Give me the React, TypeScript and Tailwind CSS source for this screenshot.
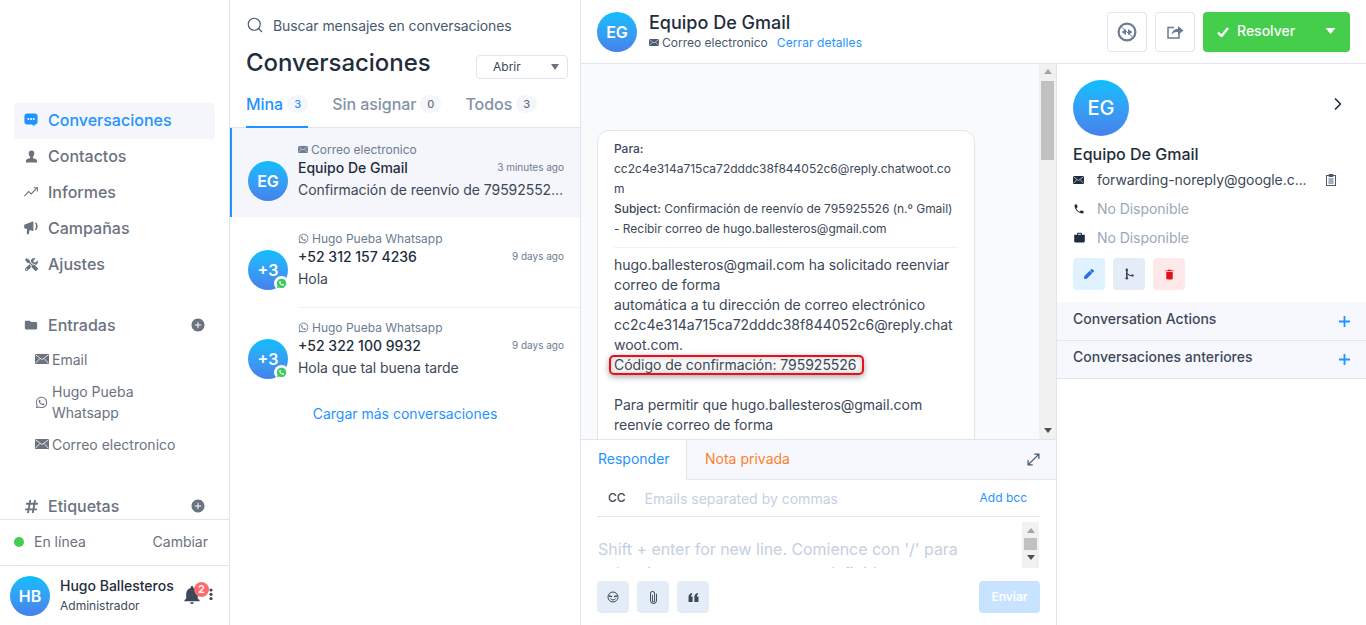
import React from "react";
import {
  IoMdFolder, IoIosAddCircle, IoLogoWhatsapp, IoMdNotifications, IoMdCall, IoMdBriefcase, IoMdTrash, IoMdAttach,
} from "react-icons/io";
import { FaHashtag, FaTools, FaPen, FaWhatsapp } from "react-icons/fa";
import { ChevronRight, Search } from "lucide-react";

function Avatar({ text, size, font }: { text: string; size: string; font: string }) {
  return (
    <div className={`${size} ${font} shrink-0 rounded-full bg-gradient-to-t from-[#4481eb] to-[#04befe] text-white flex items-center justify-center`}>
      {text}
    </div>
  );
}

function ChatBubbleIcon({ className }: { className?: string }) {
  return (
    <svg viewBox="0 0 14 14" className={className} fill="currentColor">
      <path d="M3 .5h8A2.6 2.6 0 0 1 13.6 3v6A2.6 2.6 0 0 1 11 11.5h-.6l.6 2-3-2H3A2.6 2.6 0 0 1 .4 9V3A2.6 2.6 0 0 1 3 .5Z" />
      <circle cx="4.3" cy="6" r="1" fill="#fff" />
      <circle cx="7" cy="6" r="1" fill="#fff" />
      <circle cx="9.7" cy="6" r="1" fill="#fff" />
    </svg>
  );
}

function MailIcon({ className, line = "#fff" }: { className?: string; line?: string }) {
  return (
    <svg viewBox="0 0 14 10" className={className} fill="currentColor">
      <rect width="14" height="10" rx="0.6" />
      <path d="M.5.8 7 5.6 13.5.8M.6 9.2l4.3-4.7M13.4 9.2 9.1 4.5" fill="none" stroke={line} strokeWidth="0.8" />
    </svg>
  );
}

function PersonIcon({ className }: { className?: string }) {
  return (
    <svg viewBox="0 0 14 14" className={className} fill="currentColor">
      <path d="M7 .5c2 0 3 1.4 3 3.3 0 1.600-.8 3-1.500 3.600v1.300c1.700.6 4.500 1 4.500 3.300v1.500H1V12c0-2.300 2.800-2.700 4.500-3.300V7.400C4.800 6.800 4 5.400 4 3.800 4 1.900 5 .5 7 .5Z" />
    </svg>
  );
}

function GraphIcon({ className }: { className?: string }) {
  return (
    <svg viewBox="0 0 14 10" className={className} fill="none" stroke="currentColor" strokeWidth="1.1">
      <path d="M.4 9.200 4.600 4.600 7.200 7 12.800 1.200" />
      <path d="M9.600.7h3.800v3.800" />
    </svg>
  );
}

function MegaphoneIcon({ className }: { className?: string }) {
  return (
    <svg viewBox="0 0 14 14" className={className} fill="currentColor">
      <path d="M.2 3.800 8.600.6c.5-.2.8.1.8.6v8.200c0 .5-.3.8-.8.6L5.600 9l-.8 4.200H2.800L3 8.100.2 7.200Z" />
      <path d="M10.600 1.600h.8c1.300 0 2.200 1.600 2.200 3.700s-.9 3.700-2.200 3.700h-.8c.8-.8 1.300-2.200 1.300-3.700s-.5-2.900-1.300-3.700Z" />
    </svg>
  );
}

function NavItem({ icon, label, active }: { icon: React.ReactNode; label: string; active?: boolean }) {
  return (
    <div className={`h-9 mx-[14px] pb-[2px] rounded-[4px] flex items-center pl-[10px] ${active ? "bg-[#f4f6fb] text-[#1f93ff]" : "text-[#6b7280]"}`}>
      <span className="w-[14px] h-[14px] flex items-center justify-center">{icon}</span>
      <span className="ml-[10px] text-[16px] font-medium">{label}</span>
    </div>
  );
}

function Sidebar() {
  return (
    <aside className="w-[230px] shrink-0 h-full border-r border-[#e0e6ed] flex flex-col">
      <div className="flex-1 overflow-hidden pt-[103px] min-h-0">
        <NavItem active label="Conversaciones" icon={<ChatBubbleIcon className="w-[14px] h-[14px] shrink-0" />} />
        <NavItem label="Contactos" icon={<PersonIcon className="w-[13px] h-[13px] shrink-0" />} />
        <NavItem label="Informes" icon={<GraphIcon className="w-[14px] h-[10px] shrink-0" />} />
        <NavItem label="Campañas" icon={<MegaphoneIcon className="w-[14px] h-[14px] shrink-0" />} />
        <NavItem label="Ajustes" icon={<FaTools className="w-[13px] h-[13px] shrink-0" />} />

        <div className="mt-[25px] mx-[14px] h-9 pb-[2px] pl-[10px] pr-[9px] flex items-center text-[#6b7280]">
          <IoMdFolder className="w-[14px] h-[14px]" />
          <span className="ml-[10px] text-[16px] font-medium flex-1">Entradas</span>
          <IoIosAddCircle className="w-[16px] h-[16px]" />
        </div>
        <div className="flex items-center h-[34px] -mt-[2px] pl-[35px] text-[14px] text-[#6b7280]">
          <MailIcon className="w-[14px] h-[10px] mr-[3px]" />
          Email
        </div>
        <div className="flex items-center h-[50px] mt-[1px] pl-[35px] text-[14px] leading-[21px] text-[#6b7280]">
          <FaWhatsapp className="w-[13px] h-[13px] mr-[4px] shrink-0" />
          <span>Hugo Pueba<br />Whatsapp</span>
        </div>
        <div className="flex items-center h-[34px] pl-[35px] text-[14px] text-[#6b7280]">
          <MailIcon className="w-[14px] h-[10px] mr-[3px]" />
          Correo electronico
        </div>
        <div className="mt-[28px] mx-[14px] h-9 pb-[2px] pl-[10px] pr-[9px] flex items-center text-[#6b7280]">
          <FaHashtag className="w-[15px] h-[15px] -mr-[1px]" />
          <span className="ml-[10px] text-[16px] font-medium flex-1">Etiquetas</span>
          <IoIosAddCircle className="w-[16px] h-[16px]" />
        </div>
      </div>
      <div className="h-[46px] shrink-0 border-t border-[#e0e6ed] pb-[2px] flex items-center pl-[14px] pr-[21px] text-[14px] text-[#6b7280]">
        <span className="w-[10px] h-[10px] rounded-full bg-[#44ce4b]" />
        <span className="ml-[10px] flex-1">En línea</span>
        <span>Cambiar</span>
      </div>
      <div className="h-[60px] shrink-0 border-t border-[#e0e6ed] flex items-center pl-[10px]">
        <Avatar text="HB" size="w-[40px] h-[40px]" font="text-[16px] font-semibold" />
        <div className="ml-[10px] w-[123px]">
          <div className="text-[14px] leading-[20px] font-medium text-[#1f2d3d]">Hugo Ballesteros</div>
          <div className="text-[12px] leading-[20px] text-[#3c4858]">Administrador</div>
        </div>
        <div className="relative w-[20px] h-[22px] -mt-[1px]">
          <IoMdNotifications className="w-[22px] h-[22px] -ml-[2px] text-[#3c4858]" />
          <span className="absolute -top-[2px] left-[11px] w-[15px] h-[15px] rounded-full bg-[#ff6b6b] text-white text-[11px] font-semibold flex items-center justify-center">2</span>
        </div>
        <svg viewBox="0 0 4 12" className="w-[4px] h-[12px] ml-[6px] -mt-[4px]" fill="#3c4858">
          <circle cx="2" cy="2" r="1.6" /><circle cx="2" cy="6.300" r="1.6" /><circle cx="2" cy="10.500" r="1.6" />
        </svg>
      </div>
    </aside>
  );
}

function Tab({ label, count, active }: { label: string; count: string; active?: boolean }) {
  return (
    <div className={`h-[38px] flex items-start pt-[2px] border-b-2 ${active ? "border-[#1f93ff]" : "border-transparent"}`}>
      <span className={`text-[16px] font-medium leading-[24px] tracking-[-0.05px] ${active ? "text-[#1f93ff]" : "text-[#8492a6]"}`}>{label}</span>
      <span className={`ml-[4px] mt-[3px] w-[21px] h-[18px] rounded-full bg-[#f4f6fb] text-[11px] font-medium flex items-center justify-center ${active ? "text-[#1f93ff]" : "text-[#6b7280]"}`}>{count}</span>
    </div>
  );
}

function ConvRow({ channel, wa, name, time, msg, avatar, active, divider }: { channel: string; wa?: boolean; name: string; time: string; msg: string; avatar: string; active?: boolean; divider?: boolean }) {
  return (
    <div className={`h-[89px] flex ${active ? "bg-[#f4f6fb] border-l-2 border-[#1f93ff] pl-[16px]" : "pl-[18px]"}`}>
      <div className="relative mt-[33px] h-[40px]">
        <Avatar text={avatar} size="w-[40px] h-[40px]" font="text-[16px] font-semibold" />
        {wa && (
          <span className="absolute -right-[1px] -bottom-[1px] w-[15px] h-[15px] rounded-full bg-white flex items-center justify-center">
            <IoLogoWhatsapp className="w-[11px] h-[11px] text-[#44c767]" />
          </span>
        )}
      </div>
      <div className={`ml-[10px] flex-1 pr-[16px] min-w-0 pt-[14px] ${divider ? "h-[91px] shrink-0 border-b border-[#f0f2f5]" : ""}`}>
        <div className="flex items-center text-[12px] leading-[15px] text-[#6b7c93]">
          {wa ? <FaWhatsapp className="w-[11px] h-[11px] mr-[3px]" /> : <MailIcon className="w-[10px] h-[7px] mr-[3px]" line="#f4f6fb" />}
          {channel}
        </div>
        <div className="flex items-center justify-between h-[20px]">
          <span className="text-[14px] font-medium text-[#1f2d3d]">{name}</span>
          <span className="text-[10px] text-[#6b7c93] mt-[1px]">{time}</span>
        </div>
        <div className="mt-[3px] text-[14px] leading-[20px] text-[#3c4858] truncate tracking-[-0.06px]">{msg}</div>
      </div>
    </div>
  );
}

function ConversationList() {
  return (
    <section className="w-[351px] shrink-0 h-full border-r border-[#e0e6ed] flex flex-col">
      <div className="flex items-center h-[26px] mt-[12px] pl-[16px]">
        <Search className="w-[18px] h-[18px] text-[#47596f]" strokeWidth={1.5} />
        <span className="ml-[9px] text-[14px] text-[#47596f] tracking-[-0.09px]">Buscar mensajes en conversaciones</span>
      </div>
      <div className="flex items-center justify-between pl-[16px] pr-[12px] mt-[9px] h-[32px]">
        <h1 className="text-[24px] font-medium text-[#1f2d3d] tracking-[-0.05px]">Conversaciones</h1>
        <div className="w-[92px] h-[24px] mt-[7px] rounded-[4px] border border-[#e0e6ed] flex items-center justify-between pl-[16px] pr-[8px] text-[12px] text-[#3c4858]">
          Abrir
          <svg viewBox="0 0 8 6" className="w-[8px] h-[6px]"><path d="M0 0h8L4 6Z" fill="#6b7280" /></svg>
        </div>
      </div>
      <div className="flex border-b border-[#e0e6ed] h-[38px] mt-[11px] pl-[16px] gap-[24px]">
        <Tab active label="Mina" count="3" />
        <Tab label="Sin asignar" count="0" />
        <Tab label="Todos" count="3" />
      </div>
      <ConvRow active avatar="EG" channel="Correo electronico" name="Equipo De Gmail" time="3 minutes ago" msg="Confirmación de reenvío de 795925526 (n.º Gmail)" />
      <ConvRow wa divider avatar="+3" channel="Hugo Pueba Whatsapp" name="+52 312 157 4236" time="9 days ago" msg="Hola" />
      <ConvRow wa avatar="+3" channel="Hugo Pueba Whatsapp" name="+52 322 100 9932" time="9 days ago" msg="Hola que tal buena tarde" />
      <div className="text-center text-[14px] text-[#1f93ff] mt-[8px]">Cargar más conversaciones</div>
    </section>
  );
}

function OutlineBtn({ children }: { children: React.ReactNode }) {
  return <div className="w-[40px] h-[40px] rounded-[4px] border border-[#e0e6ed] flex items-center justify-center text-[#6b7c93]">{children}</div>;
}

function SoftBtn({ children, className }: { children: React.ReactNode; className?: string }) {
  return <div className={`w-[32px] h-[32px] rounded-[4px] flex items-center justify-center ${className ?? "bg-[#e4ecf8] text-[#3c4858]"}`}>{children}</div>;
}

function Chat() {
  return (
    <section className="w-[476px] shrink-0 h-full border-r border-[#e0e6ed] flex flex-col min-h-0">
      <div className="h-[375px] shrink-0 flex overflow-hidden bg-[#f8fafc]">
        <div className="flex-1 pl-[16px] pt-[66px] min-w-0">
          <div className="w-[378px] rounded-t-[12px] border border-[#e0e6ed] bg-white px-[16px] pt-[8px] pb-[8px] text-[#3c4858] tracking-[-0.03px]">
            <div className="text-[12px] leading-[20px]">
              <div className="font-medium">Para:</div>
              <div className="tracking-normal">cc2c4e314a715ca72dddc38f844052c6@reply.chatwoot.co</div>
              <div>m</div>
              <div><span className="font-medium">Subject:</span> Confirmación de reenvío de 795925526 (n.º Gmail)</div>
              <div>- Recibir correo de hugo.ballesteros@gmail.com</div>
            </div>
            <div className="h-px bg-[#f0f2f5] mt-[8px] mb-[7px]" />
            <div className="text-[14px] leading-[20px]">
              <div>hugo.ballesteros@gmail.com ha solicitado reenviar</div>
              <div>correo de forma</div>
              <div>automática a tu dirección de correo electrónico</div>
              <div>cc2c4e314a715ca72dddc38f844052c6@reply.chat</div>
              <div>woot.com.</div>
              <div className="w-fit -ml-[5px] h-[20px] pl-[3px] pr-[5px] rounded-[5px] border-2 border-[#e8101c] leading-[16px] bg-[#f7f7f7] shadow-[0_2px_6px_rgba(0,0,0,0.35),inset_0_0_5px_rgba(0,0,0,0.2)]">Código de confirmación: 795925526</div>
              <div className="mt-[20px]">Para permitir que hugo.ballesteros@gmail.com</div>
              <div>reenvíe correo de forma</div>
            </div>
          </div>
        </div>
        <div className="w-[17px] shrink-0 bg-[#f1f1f1] flex flex-col items-center">
          <svg viewBox="0 0 8 5" className="w-[8px] h-[5px] mt-[5px]"><path d="M4 0l4 5H0Z" fill="#a3a3a3" /></svg>
          <div className="w-[13px] h-[79px] mt-[7px] bg-[#c1c1c1]" />
          <div className="flex-1" />
          <svg viewBox="0 0 8 5" className="w-[8px] h-[5px] mb-[6px]"><path d="M0 0h8L4 5Z" fill="#505050" /></svg>
        </div>
      </div>
      <div className="flex-1 min-h-0 border-t border-[#e0e6ed] flex flex-col">
        <div className="h-[40px] shrink-0 flex bg-[#f7f8fd]">
          <div className="w-[106px] pl-[17px] pb-[3px] bg-white border-r border-[#e0e6ed] flex items-center text-[14px] text-[#1f93ff]">Responder</div>
          <div className="flex-1 border-b border-[#e0e6ed] flex items-center justify-between pl-[18px] pr-[16px]">
            <span className="text-[14px] text-[#ff7f2a] -mt-[2px]">Nota privada</span>
            <svg viewBox="0 0 14 14" className="w-[13px] h-[13px] text-[#47596f]" fill="none" stroke="currentColor" strokeWidth="1.4">
              <path d="M2 12 12 2M7.800 1.200h5v5M1.200 7.800v5h5" />
            </svg>
          </div>
        </div>
        <div className="mx-[16px] h-[37px] shrink-0 border-b border-[#e0e6ed] flex items-center text-[12px]">
          <span className="ml-[11px] font-medium text-[#3c4858]">CC</span>
          <span className="ml-[19px] flex-1 text-[14px] text-[#c5d0df]">Emails separated by commas</span>
          <span className="mr-[13px] text-[#1f93ff]">Add bcc</span>
        </div>
        <div className="h-[46px] mt-[5px] shrink-0 mx-[16px] flex overflow-hidden">
          <div className="flex-1 pl-[1px] pt-[15px] text-[16px] leading-[24px] text-[#c5d0df] min-w-0 tracking-[-0.05px]">
            Shift + enter for new line. Comience con '/' para<br />
            seleccionar una respuesta predefinida.
          </div>
          <div className="w-[17px] mr-[1px] shrink-0 bg-[#f1f1f1] flex flex-col items-center">
            <svg viewBox="0 0 8 5" className="w-[8px] h-[5px] mt-[6px]"><path d="M4 0l4 5H0Z" fill="#a3a3a3" /></svg>
            <div className="w-[13px] h-[12px] mt-[5px] bg-[#c1c1c1]" />
            <svg viewBox="0 0 8 5" className="w-[8px] h-[5px] mt-[5px]"><path d="M0 0h8L4 5Z" fill="#505050" /></svg>
          </div>
        </div>
        <div className="mt-[13px] mx-[16px] flex gap-[8px]">
          <SoftBtn>
            <svg viewBox="0 0 12 12" className="w-[12px] h-[12px]" fill="none" stroke="currentColor" strokeWidth="1">
              <circle cx="6" cy="6" r="5" /><path d="M2 5l3 .6M10 5l-3 .6" strokeWidth="1.300" /><path d="M3.300 7.600c1.500 1.800 3.900 1.800 5.400 0" />
            </svg>
          </SoftBtn>
          <SoftBtn><IoMdAttach className="w-[15px] h-[15px]" /></SoftBtn>
          <SoftBtn>
            <svg viewBox="0 0 12 10" className="w-[11px] h-[9px]" fill="currentColor">
              <path d="M.5 4.500C.5 2 1.700.6 4.500 0v1.800C3.600 2.100 3.200 2.800 3.200 4H5v6H.5ZM7 4.500C7 2 8.200.6 11 0v1.800c-.9.300-1.300 1-1.300 2.200h1.800v6H7Z" />
            </svg>
          </SoftBtn>
          <div className="flex-1" />
          <div className="w-[61px] h-[32px] rounded-[4px] bg-[#c7e3ff] text-white text-[12px] font-semibold flex items-center justify-center">Enviar</div>
        </div>
      </div>
    </section>
  );
}

function Row({ icon, text, muted, extra }: { icon: React.ReactNode; text: string; muted?: boolean; extra?: React.ReactNode }) {
  return (
    <div className="flex items-center h-[29px]">
      <span className="w-[24px] shrink-0 text-[#1f2d3d] flex items-center">{icon}</span>
      <span className={`text-[14px] tracking-[-0.05px] ${muted ? "text-[#9aa8ba]" : "text-[#3c4858]"}`}>{text}</span>
      {extra}
    </div>
  );
}

function Accordion({ title }: { title: string }) {
  return (
    <div className="h-[38px] border-b border-[#e0e6ed] bg-[#f7f8fd] pl-[16px] pr-[16px] flex justify-between items-center">
      <span className="text-[14px] font-medium text-[#3c4858] -mt-[7px]">{title}</span>
      <svg viewBox="0 0 11 11" className="w-[11px] h-[11px] text-[#1f93ff]" fill="none" stroke="currentColor" strokeWidth="1.800"><path d="M5.500 0v11M0 5.500h11" /></svg>
    </div>
  );
}

function Details() {
  return (
    <section className="flex-1 min-w-0 flex flex-col h-full">
      <div className="pt-[16px] pl-[16px] pr-[20px]">
        <div className="flex justify-between items-start">
          <Avatar text="EG" size="w-[56px] h-[56px]" font="text-[20px] font-medium" />
          <ChevronRight className="w-[20px] h-[20px] mt-[14px] -mr-[2px] text-[#1f2d3d]" />
        </div>
        <div className="mt-[8px] text-[16px] leading-[20px] font-medium text-[#1f2d3d]">Equipo De Gmail</div>
        <div className="mt-[1px]">
          <Row icon={<MailIcon className="w-[11px] h-[8px]" />} text="forwarding-noreply@google.c..."
            extra={
              <svg viewBox="0 0 10 12" className="w-[10px] h-[12px] ml-[19px] text-[#47596f]" fill="none" stroke="currentColor" strokeWidth="1">
                <rect x="0.500" y="1.500" width="9" height="10" /><path d="M3 .5h4v2H3ZM2.500 5h5M2.500 7h5M2.500 9h5" />
              </svg>
            } />
          <Row muted icon={<IoMdCall className="w-[12px] h-[12px]" />} text="No Disponible" />
          <Row muted icon={<IoMdBriefcase className="w-[13px] h-[13px]" />} text="No Disponible" />
        </div>
        <div className="flex gap-[8px] mt-[6px]">
          <SoftBtn className="bg-[#e0f1ff] text-[#2a6fe0]"><FaPen className="w-[10px] h-[10px]" /></SoftBtn>
          <SoftBtn>
            <svg viewBox="0 0 12 12" className="w-[12px] h-[12px]" fill="currentColor"><rect x="3" y="1" width="1.600" height="10" /><circle cx="3.800" cy="1.800" r="1.300" /><circle cx="3.800" cy="10.200" r="1.300" /><path d="M4 5l3 2h2v1H6.600L4 6.200Z" /><circle cx="9.500" cy="7.500" r="1.200" /></svg>
          </SoftBtn>
          <SoftBtn className="bg-[#ffe8ea] text-[#e0101a]"><IoMdTrash className="w-[13px] h-[13px]" /></SoftBtn>
        </div>
      </div>
      <div className="mt-[12px] pt-[1px] bg-[#f7f8fd]">
        <Accordion title="Conversation Actions" />
        <Accordion title="Conversaciones anteriores" />
      </div>
    </section>
  );
}

function Header() {
  return (
    <header className="h-[64px] shrink-0 border-b border-[#e0e6ed] flex items-center justify-between pl-[16px] pr-[16px]">
      <div className="flex">
        <Avatar text="EG" size="w-[40px] h-[40px]" font="text-[16px] font-semibold" />
        <div className="ml-[12px] -mt-[1px]">
          <div className="text-[18px] leading-[23px] font-medium text-[#1f2d3d]">Equipo De Gmail</div>
          <div className="flex items-center text-[12px] leading-[18px] text-[#47596f]">
            <MailIcon className="w-[10px] h-[7px] mr-[3px]" />
            Correo electronico
            <span className="ml-[9px] text-[#1f93ff] tracking-[0.1px]">Cerrar detalles</span>
          </div>
        </div>
      </div>
      <div className="flex gap-[8px]">
        <OutlineBtn>
          <svg viewBox="0 0 20 20" className="w-[20px] h-[20px]" fill="none" stroke="currentColor" strokeWidth="2.200">
            <circle cx="10" cy="10" r="8.400" />
            <path d="M3.500 4l13 12" strokeWidth="1" />
            <path d="M4.500 10l4.500-3v6ZM15.500 10l-4.500 3V7Z" fill="currentColor" stroke="none" />
          </svg>
        </OutlineBtn>
        <OutlineBtn>
          <svg viewBox="0 0 17 15" className="w-[17px] h-[15px]" fill="none" stroke="currentColor" strokeWidth="1.500">
            <path d="M7 3.500H1v10.500h11V9" />
            <path d="M4.500 10.500C5 7 7.500 5 11 5V2l5.500 4.500L11 11V8C8.500 8 6 8.500 4.500 10.500Z" fill="currentColor" stroke="none" />
          </svg>
        </OutlineBtn>
        <div className="w-[147px] h-[40px] pb-[2px] rounded-[4px] bg-[#44ce4b] text-white flex items-center pl-[14px] pr-[14px] text-[14px] font-medium">
          <svg viewBox="0 0 12 10" className="w-[12px] h-[10px] mr-[8px] mt-[2px]" fill="none" stroke="currentColor" strokeWidth="2.400"><path d="M1 5.500 4.500 9 11 1" /></svg>
          <span className="flex-1">Resolver</span>
          <svg viewBox="0 0 10 6" className="w-[11px] h-[6px] mt-[1px]"><path d="M0 0h10L5 6Z" fill="#fff" /></svg>
        </div>
      </div>
    </header>
  );
}

export default function App() {
  return (
    <div className="w-[1366px] h-[625px] overflow-hidden bg-white flex font-['Inter',sans-serif]">
      <Sidebar />
      <ConversationList />
      <main className="flex-1 min-w-0 h-full flex flex-col">
        <Header />
        <div className="flex-1 min-h-0 flex">
          <Chat />
          <Details />
        </div>
      </main>
    </div>
  );
}
